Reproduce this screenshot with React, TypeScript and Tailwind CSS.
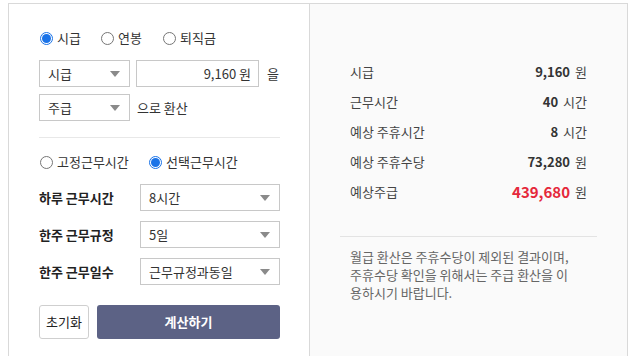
import React, { useState } from 'react';

const FONT = '"Noto Sans CJK KR", "Noto Sans", sans-serif';

// ---- small pieces ----
function Radio({ checked, label, onClick, className = '' }: { checked: boolean; label: string; onClick?: () => void; className?: string }) {
  return (
    <button type="button" onClick={onClick} className={`flex items-center gap-[4px] h-[20px] ${className}`}>
      {checked ? (
        <span className="w-[13px] h-[13px] rounded-full border border-[#1a73e8] flex items-center justify-center">
          <span className="w-[9px] h-[9px] rounded-full bg-[#1a73e8]" />
        </span>
      ) : (
        <span className="w-[13px] h-[13px] rounded-full border border-[#767676] bg-white" />
      )}
      <span className="text-[13px] text-[#333]">{label}</span>
    </button>
  );
}

function Select({ value, className = '' }: { value: string; className?: string }) {
  return (
    <div className={`h-[27px] border border-[#c8c8c8] bg-white flex items-center justify-between pl-[8px] pr-[9px] ${className}`}>
      <span className="text-[13px] text-[#333]">{value}</span>
      <svg width="10" height="6" viewBox="0 0 10 6">
        <path d="M0 0 L10 0 L5 6 Z" fill="#8a8a8a" />
      </svg>
    </div>
  );
}

function FieldRow({ label, value }: { label: string; value: string }) {
  return (
    <div className="flex items-center h-[27px]">
      <span className="w-[101px] text-[13px] font-semibold text-[#222]">{label}</span>
      <Select value={value} className="flex-1" />
    </div>
  );
}

function ResultRow({ label, value, unit, highlight }: { label: string; value: string; unit: string; highlight?: boolean }) {
  return (
    <div className="h-[30px] flex items-center justify-between">
      <span className="text-[13px] text-[#444]">{label}</span>
      <span className="flex items-center gap-[5px]">
        <span className={highlight ? 'text-[15px] font-bold text-[#e5283a]' : 'text-[13px] font-bold text-[#333]'}>{value}</span>
        <span className="text-[13px] text-[#444]">{unit}</span>
      </span>
    </div>
  );
}

export default function App() {
  const [payType, setPayType] = useState<'hour' | 'year' | 'retire'>('hour');
  const [workType, setWorkType] = useState<'fixed' | 'select'>('select');

  return (
    <div className="w-[629px] h-[356px] overflow-hidden bg-white pt-[3px] pl-[8px] pr-[1px]" style={{ fontFamily: FONT }}>
      <div className="flex h-[360px] border-t border-l border-r border-[#d9d9d9]">
        {/* left: input form */}
        <div className="w-[300px] pl-[30px] pr-[29px] pt-[24px]">
          <div className="flex items-center pl-[1px]">
            <Radio checked={payType === 'hour'} label="시급" onClick={() => setPayType('hour')} className="w-[61px]" />
            <Radio checked={payType === 'year'} label="연봉" onClick={() => setPayType('year')} className="w-[62px]" />
            <Radio checked={payType === 'retire'} label="퇴직금" onClick={() => setPayType('retire')} />
          </div>

          <div className="mt-[12px] flex items-center">
            <Select value="시급" className="w-[91px]" />
            <div className="ml-[6px] w-[123px] h-[27px] border border-[#c8c8c8] bg-white flex items-center justify-end pr-[7px]">
              <span className="text-[13px] text-[#333]">9,160 원</span>
            </div>
            <span className="ml-[8px] text-[13px] text-[#333]">을</span>
          </div>
          <div className="mt-[7px] flex items-center">
            <Select value="주급" className="w-[91px]" />
            <span className="ml-[7px] text-[13px] text-[#333]">으로 환산</span>
          </div>

          <div className="mt-[16px] h-px bg-[#e8e8e8]" />

          <div className="mt-[14px] flex items-center pl-[1px]">
            <Radio checked={workType === 'fixed'} label="고정근무시간" onClick={() => setWorkType('fixed')} className="w-[109px]" />
            <Radio checked={workType === 'select'} label="선택근무시간" onClick={() => setWorkType('select')} />
          </div>

          <div className="mt-[12px] flex flex-col gap-[10px]">
            <FieldRow label="하루 근무시간" value="8시간" />
            <FieldRow label="한주 근무규정" value="5일" />
            <FieldRow label="한주 근무일수" value="근무규정과동일" />
          </div>

          <div className="mt-[20px] flex gap-[8px] h-[34px]">
            <button type="button" className="w-[50px] border border-[#cfcfcf] rounded-[3px] bg-white text-[13px] text-[#222]">
              초기화
            </button>
            <button type="button" className="flex-1 rounded-[3px] bg-[#5c6285] text-[13px] font-bold text-white">
              계산하기
            </button>
          </div>
        </div>

        {/* right: result */}
        <div className="flex-1 border-l border-[#d9d9d9] bg-[#fafafa] px-[30px] pt-[53px]">
          <div className="px-[10px]">
            <ResultRow label="시급" value="9,160" unit="원" />
            <ResultRow label="근무시간" value="40" unit="시간" />
            <ResultRow label="예상 주휴시간" value="8" unit="시간" />
            <ResultRow label="예상 주휴수당" value="73,280" unit="원" />
            <ResultRow label="예상주급" value="439,680" unit="원" highlight />
          </div>
          <div className="mt-[29px] h-px bg-[#e3e3e3]" />
          <p className="mt-[11px] px-[10px] text-[13px] leading-[18px] text-[#666]">
            월급 환산은 주휴수당이 제외된 결과이며,
            <br />
            주휴수당 확인을 위해서는 주급 환산을 이
            <br />
            용하시기 바랍니다.
          </p>
        </div>
      </div>
    </div>
  );
}
